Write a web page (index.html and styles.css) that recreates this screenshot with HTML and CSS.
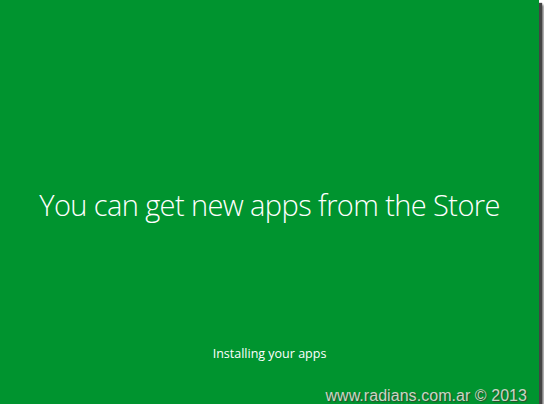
FILE: index.html
```html
<!DOCTYPE html>
<html lang="en">
<head>
    <meta charset="UTF-8">
    <meta name="viewport" content="width=device-width, initial-scale=1.0">
    <title>Installing your apps</title>
    <link rel="stylesheet" href="styles.css">
</head>
<body>
    <div id="screen">
        <h1 class="headline">You can get new apps from the Store</h1>
        <p class="status">Installing your apps</p>
        <p class="watermark">www.radians.com.ar © 2013</p>
    </div>
</body>
</html>
```

FILE: styles.css
```css
body {
    margin: 0;
    padding: 0;
    background-color: #ffffff;
    font-family: "Open Sans", "Liberation Sans", sans-serif;
}
#screen {
    width: 539px;
    height: 404px;
    background-color: #00942f;
    box-shadow: 3px 3px 1px #444444, 5px 5px 2px #8a8a8a;
    display: flex;
    flex-direction: column;
    align-items: center;
    color: #ffffff;
}
.headline {
    margin: 186px 0 0;
    font-size: 29px;
    font-weight: 300;
    line-height: 38px;
    letter-spacing: -0.6px;
}
.status {
    margin: 121px 0 0;
    font-size: 12.5px;
    font-weight: 400;
    line-height: 18px;
}
.watermark {
    align-self: flex-end;
    margin: 24px 12px 0 0;
    font-family: "Liberation Sans", Arial, sans-serif;
    font-size: 16px;
    line-height: 18px;
    color: #c9d6c4;
    text-shadow: 1px 1px 1px #2f4a2f;
    letter-spacing: 0.05px;
}
```
